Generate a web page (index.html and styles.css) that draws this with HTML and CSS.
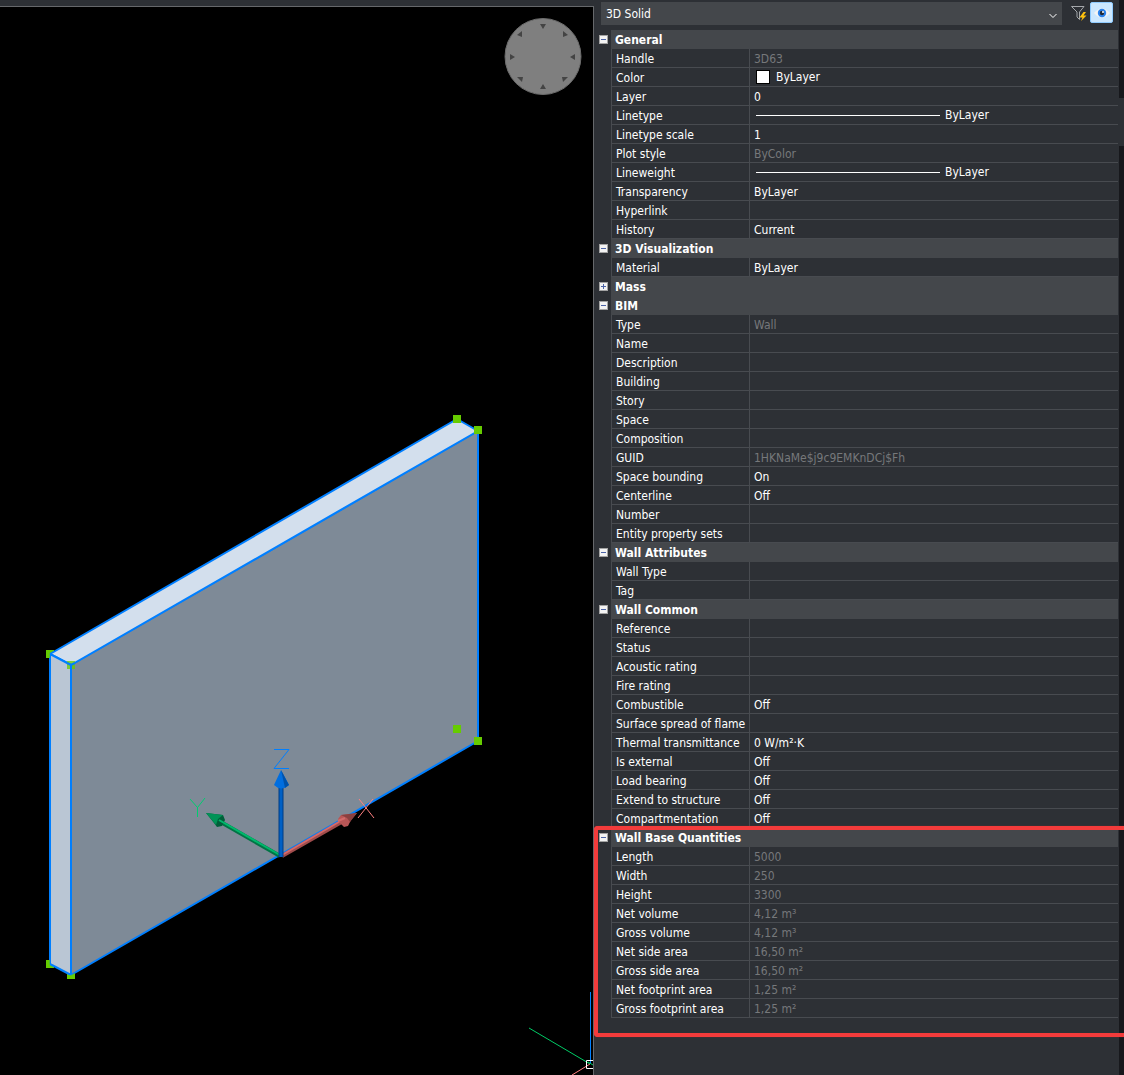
FILE: index.html
```html
<!DOCTYPE html>
<html lang="en">
<head>
<meta charset="utf-8">
<title>3D Solid properties</title>
<link rel="stylesheet" href="styles.css">
</head>
<body>
<main class="viewport">
  <svg class="scene" viewBox="0 7 593 1068" preserveAspectRatio="xMinYMin slice" role="img" aria-label="Wall model in 3D view">
    <circle cx="543" cy="56.500" r="38" fill="#7f7f7f" stroke="#6c6c6c"/>
    <g fill="#444">
      <path d="M540 24h6l-3 5z"/><path d="M540 89h6l-3-5z"/>
      <path d="M510 54v6l5-3z"/><path d="M575 54v6l-5-3z"/>
      <path d="M517 35l5-4v6z"/><path d="M568 35l-5-4v6z"/>
      <path d="M517 77l6 0l-1 5z"/><path d="M568 77l-6 0l1 5z"/>
    </g>
    <g fill="#66cc00">
      <path d="M46 650h8v8h-8z"/><path d="M46 960h8v8h-8z"/><path d="M67 971h8v8h-8z"/>
    </g>
    <g stroke="#007fff" stroke-width="2" stroke-linejoin="round">
      <path d="M71 665L478 431V741L71 975z" fill="#7e8a97"/>
      <path d="M50 654L457 419L478 431L71 665z" fill="#d3dfed"/>
      <path d="M50 654L71 665V975L50 964z" fill="#bac6d4"/>
    </g>
    <g fill="#66cc00">
      <path d="M453 415h8v8h-8z"/><path d="M474 426h8v8h-8z"/>
      <path d="M474 737h8v8h-8z"/><path d="M453 725h8v8h-8z"/>
      <path d="M67 661h8v8h-8zM46 650h4v8h-4zM46 960h4v8h-4zM67 975l4 0 4-2v6h-8z" fill-opacity=".75"/>
    </g>
    <path d="M67 663L71 665L75 663M71 665V669" fill="none" stroke="#007fff" stroke-width="2"/>
    <path d="M282 856L345 820" stroke="#a04c4c" stroke-width="4"/>
    <path d="M282 855L344 819" stroke="#d36a6a" stroke-width="2"/>
    <path d="M357 813L341 815L338 819L340 823L344 827L348 826L351 820z" fill="#b85656"/>
    <path d="M357 813L341 815L347 818L350 822z" fill="#8a4040"/>
    <path d="M338 821L345 818" stroke="#d36a6a" stroke-width="2"/>
    <path d="M280 856L219 821" stroke="#007445" stroke-width="4"/>
    <path d="M206 813L223 815L225 820L222 826L217 827L214 823z" fill="#005f39"/>
    <path d="M206 813L223 815L218 819L216 825z" fill="#009357"/>
    <path d="M280 855L219 820" stroke="#00b86c" stroke-width="2"/>
    <path d="M281 857V786" stroke="#003d83" stroke-width="5"/>
    <path d="M281 857V786" stroke="#0060c5" stroke-width="3"/>
    <path d="M281 770L274 785Q281 792 289 785z" fill="#006ee0"/>
    <path d="M281 770L285 788L289 785z" fill="#0052aa"/>
    <g fill="none" stroke-width="1">
      <path d="M274 749.500H289L274 768.500H289" stroke="#007fff"/>
      <path d="M190 799L197.500 807.500L205 798M197.500 807V817" stroke="#00cc70"/>
      <path d="M359 799L374 818M373 799L358 818" stroke="#ff8080"/>
      <path d="M529 1028L590 1064" stroke="#00cc66"/>
      <path d="M572 1075L590 1064" stroke="#ff8080"/>
      <path d="M590.500 992V1064" stroke="#007fff"/>
      <path d="M594 1060.500H586.500V1068.500H594" stroke="#fff"/>
      <path d="M588 1062L593 1065" stroke="#00cc66"/>
    </g>
  </svg>
</main>
<aside class="panel" aria-label="Properties">
  <div class="content">
    <header class="toolbar">
      <div class="picker">
        <select class="picker-select" aria-label="Entity type"><option>3D Solid</option></select>
        <svg class="chevron" viewBox="0 0 8 6" aria-hidden="true"><path d="M.5 1L4 4.500L7.500 1" fill="none" stroke="#fff"/></svg>
      </div>
      <button class="tool" type="button" aria-label="Quick select">
        <svg width="18" height="18" viewBox="0 0 18 18"><path d="M1.500 2.500H14L9.500 8V15.500L7 13V8z" fill="none" stroke="#a5a8ac"/><path d="M13.500 8l-4 5.500h3L11 17l5.500-5.500h-3L16 8z" fill="#ffc20e"/></svg>
      </button>
      <button class="tool tool-on" type="button" aria-label="Preview" aria-pressed="true">
        <svg width="18" height="14" viewBox="0 0 18 14"><path d="M1 7Q9-2 17 7Q9 16 1 7z" fill="#f4f4f4"/><circle cx="9" cy="7" r="4.200" fill="#2b83ed"/><circle cx="9" cy="7" r="2.200" fill="#202938"/><circle cx="10" cy="6" r="1" fill="#fff"/></svg>
      </button>
    </header>
    <section class="group">
      <h2 class="group-head"><button class="toggle" type="button" aria-label="Collapse General"></button><span class="group-title">General</span></h2>
      <table class="props">
        <tr><th>Handle</th><td class="muted">3D63</td></tr>
        <tr><th>Color</th><td class="drawn"><span class="sample"><span class="swatch"></span>ByLayer</span></td></tr>
        <tr><th>Layer</th><td>0</td></tr>
        <tr><th>Linetype</th><td class="drawn"><span class="sample"><span class="stroke"></span>ByLayer</span></td></tr>
        <tr><th>Linetype scale</th><td>1</td></tr>
        <tr><th>Plot style</th><td class="muted">ByColor</td></tr>
        <tr><th>Lineweight</th><td class="drawn"><span class="sample"><span class="stroke"></span>ByLayer</span></td></tr>
        <tr><th>Transparency</th><td>ByLayer</td></tr>
        <tr><th>Hyperlink</th><td></td></tr>
        <tr><th>History</th><td>Current</td></tr>
      </table>
    </section>
    <section class="group">
      <h2 class="group-head"><button class="toggle" type="button" aria-label="Collapse 3D Visualization"></button><span class="group-title">3D Visualization</span></h2>
      <table class="props">
        <tr><th>Material</th><td>ByLayer</td></tr>
      </table>
    </section>
    <section class="group">
      <h2 class="group-head"><button class="toggle toggle-closed" type="button" aria-label="Expand Mass"></button><span class="group-title">Mass</span></h2>
    </section>
    <section class="group">
      <h2 class="group-head"><button class="toggle" type="button" aria-label="Collapse BIM"></button><span class="group-title">BIM</span></h2>
      <table class="props">
        <tr><th>Type</th><td class="muted">Wall</td></tr>
        <tr><th>Name</th><td></td></tr>
        <tr><th>Description</th><td></td></tr>
        <tr><th>Building</th><td></td></tr>
        <tr><th>Story</th><td></td></tr>
        <tr><th>Space</th><td></td></tr>
        <tr><th>Composition</th><td></td></tr>
        <tr><th>GUID</th><td class="muted">1HKNaMe$j9c9EMKnDCj$Fh</td></tr>
        <tr><th>Space bounding</th><td>On</td></tr>
        <tr><th>Centerline</th><td>Off</td></tr>
        <tr><th>Number</th><td></td></tr>
        <tr><th>Entity property sets</th><td></td></tr>
      </table>
    </section>
    <section class="group">
      <h2 class="group-head"><button class="toggle" type="button" aria-label="Collapse Wall Attributes"></button><span class="group-title">Wall Attributes</span></h2>
      <table class="props">
        <tr><th>Wall Type</th><td></td></tr>
        <tr><th>Tag</th><td></td></tr>
      </table>
    </section>
    <section class="group">
      <h2 class="group-head"><button class="toggle" type="button" aria-label="Collapse Wall Common"></button><span class="group-title">Wall Common</span></h2>
      <table class="props">
        <tr><th>Reference</th><td></td></tr>
        <tr><th>Status</th><td></td></tr>
        <tr><th>Acoustic rating</th><td></td></tr>
        <tr><th>Fire rating</th><td></td></tr>
        <tr><th>Combustible</th><td>Off</td></tr>
        <tr><th>Surface spread of flame</th><td></td></tr>
        <tr><th>Thermal transmittance</th><td>0 W/m²·K</td></tr>
        <tr><th>Is external</th><td>Off</td></tr>
        <tr><th>Load bearing</th><td>Off</td></tr>
        <tr><th>Extend to structure</th><td>Off</td></tr>
        <tr><th>Compartmentation</th><td>Off</td></tr>
      </table>
    </section>
    <section class="group highlighted">
      <h2 class="group-head"><button class="toggle" type="button" aria-label="Collapse Wall Base Quantities"></button><span class="group-title">Wall Base Quantities</span></h2>
      <table class="props">
        <tr><th>Length</th><td class="muted">5000</td></tr>
        <tr><th>Width</th><td class="muted">250</td></tr>
        <tr><th>Height</th><td class="muted">3300</td></tr>
        <tr><th>Net volume</th><td class="muted">4,12 m³</td></tr>
        <tr><th>Gross volume</th><td class="muted">4,12 m³</td></tr>
        <tr><th>Net side area</th><td class="muted">16,50 m²</td></tr>
        <tr><th>Gross side area</th><td class="muted">16,50 m²</td></tr>
        <tr><th>Net footprint area</th><td class="muted">1,25 m²</td></tr>
        <tr><th>Gross footprint area</th><td class="muted">1,25 m²</td></tr>
      </table>
    </section>
  </div>
  <div class="scrollbar"><div class="thumb"></div></div>
</aside>
</body>
</html>
```
FILE: styles.css
```css
* { box-sizing: border-box; }

body {
  margin: 0;
  min-height: 100vh;
  display: grid;
  grid-template-columns: minmax(0, 1fr) 530px;
  background: #2d3035;
  color: #fff;
  font: 12px/18px "DejaVu Sans Condensed", "DejaVu Sans", sans-serif;
  font-stretch: condensed;
}

.viewport {
  display: grid;
  margin-top: 6px;
  border-top: 1px solid #66686b;
  border-right: 1px solid #66686b;
  background: #000;
}
.scene { display: block; width: 100%; height: 100%; min-height: 0; }

.panel { display: grid; grid-template-columns: minmax(0, 1fr) 5px; }
.content { padding: 2px 1px 20px 5px; }

.toolbar {
  display: flex;
  align-items: flex-start;
  gap: 2px;
  height: 28px;
  padding: 0 5px 0 2px;
}
.picker { position: relative; flex: 1; margin-right: 6px; }
.picker-select {
  display: block;
  width: 100%;
  height: 23px;
  padding: 0 5px;
  border: 0;
  border-radius: 0;
  appearance: none;
  background: #44474b;
  color: #fff;
  font: inherit;
}
.chevron {
  position: absolute;
  right: 5px;
  top: 11px;
  width: 8px;
  height: 6px;
  pointer-events: none;
}
.tool {
  display: grid;
  place-items: center;
  height: 21px;
  padding: 0;
  border: 0;
  background: none;
}
.tool-on {
  width: 23px;
  border: 1px solid #8fcbff;
  border-radius: 2px;
  background: #cce8ff;
}

.group-head {
  display: flex;
  align-items: center;
  gap: 3px;
  margin: 0;
  font-size: 12px;
  line-height: 17px;
}
.group-title { flex: 1; padding: 2px 0 0 4px; background: #44474b; }

.toggle {
  width: 9px;
  height: 9px;
  padding: 0;
  border: 1px solid #a3a3a3;
  background: linear-gradient(#4b63a7, #4b63a7) center / 5px 1px no-repeat, #f3f3f3;
}
.toggle-closed {
  background:
    linear-gradient(#4b63a7, #4b63a7) center / 5px 1px no-repeat,
    linear-gradient(#4b63a7, #4b63a7) center / 1px 5px no-repeat,
    #f3f3f3;
}

.props {
  width: calc(100% - 12px);
  margin-left: 12px;
  table-layout: fixed;
  border-spacing: 0;
}
.props th,
.props td {
  height: 19px;
  padding: 2px 0 0 4px;
  border-bottom: 1px solid #484b50;
  border-left: 1px solid #484b50;
  font-weight: normal;
  line-height: 16px;
  text-align: left;
  white-space: nowrap;
}
.props th { width: 138px; }
.props .muted { color: #76787b; }
.props .drawn { padding-top: 0; line-height: 18px; }

.sample { display: flex; align-items: center; gap: 5px; padding-left: 2px; }
.swatch { width: 14px; height: 14px; margin-right: 1px; border: 1px solid #000; background: #fff; }
.stroke { width: 184px; height: 1px; background: #fff; }

.highlighted { position: relative; }
.highlighted::after {
  content: "";
  position: absolute;
  inset: -2px -6px -19px -5px;
  border: 4px solid #f33b3b;
  border-right: 0;
  border-radius: 4px 0 0 4px;
  box-shadow: 0 0 1px #a02828;
  pointer-events: none;
}

.scrollbar { padding-top: 98px; background: #17181c; }
.thumb { height: 48px; background: #2d3035; }
```
